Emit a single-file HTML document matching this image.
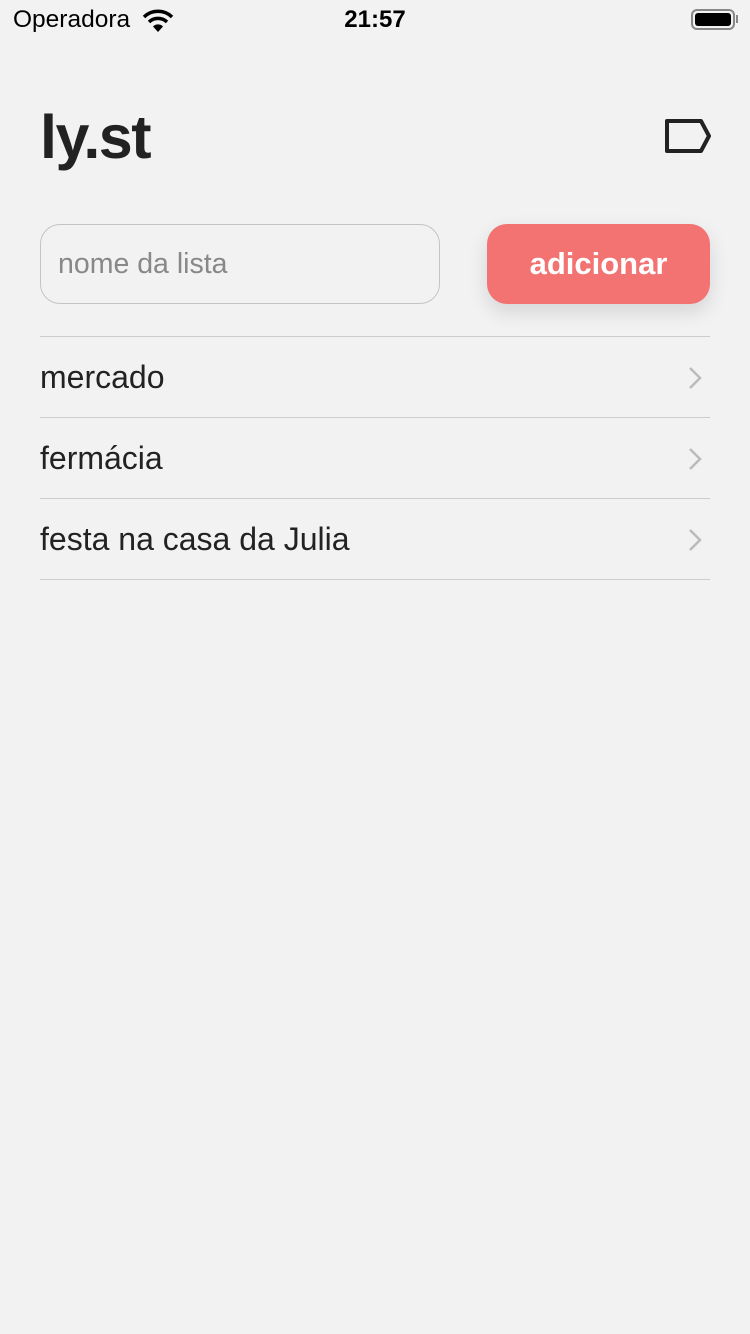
<!DOCTYPE html>
<html><head><meta charset="utf-8"><style>
*{margin:0;padding:0;box-sizing:border-box}
body{width:750px;height:1334px;background:#f2f2f2;font-family:"Liberation Sans",sans-serif;color:#222;position:relative;overflow:hidden}
.abs{position:absolute}
.row{position:absolute;left:40px;width:670px;height:81px;border-bottom:1px solid #ccc;font-size:32px;line-height:80px}
.chev{position:absolute;right:8px;top:30px}
</style></head><body>
<div class="abs" style="left:13px;top:6px;font-size:24.5px;color:#000">Operadora</div>
<svg class="abs" style="left:142px;top:9px" width="32" height="24" viewBox="0 0 32 24"><path d="M2 8 A20 20 0 0 1 30 8" stroke="#000" stroke-width="3.5" fill="none"/><path d="M7 13 A13 13 0 0 1 25 13" stroke="#000" stroke-width="3.5" fill="none"/><path d="M11 17.5 L16 23 L21 17.5 A7 7 0 0 0 11 17.5Z" fill="#000"/></svg>
<div class="abs" style="left:0;width:750px;text-align:center;top:6px;font-size:24px;font-weight:bold;color:#000">21:57</div>
<div class="abs" style="left:691px;top:9px;width:44px;height:21px;border:2px solid #888;border-radius:6px"><div style="margin:2px;height:13px;background:#000;border-radius:3px"></div></div>
<div class="abs" style="left:736px;top:15px;width:2px;height:8px;background:#888"></div>
<div class="abs" style="left:40px;top:102px;font-size:61px;font-weight:bold;letter-spacing:-1.5px;color:#222">ly.st</div>
<svg class="abs" style="left:662px;top:117px" width="50" height="40" viewBox="0 0 50 40"><path d="M5 4 H39 L47 19 L39 34 H5 Z" stroke="#222" stroke-width="4" fill="none" stroke-linejoin="round"/></svg>
<div class="abs" style="left:40px;top:224px;width:400px;height:80px;border:1px solid #c4c4c4;border-radius:20px;font-size:28.5px;color:#888;line-height:78px;padding-left:17px">nome da lista</div>
<div class="abs" style="left:487px;top:224px;width:223px;height:80px;background:#f27372;border-radius:20px;color:#fff;font-size:31px;font-weight:bold;text-align:center;line-height:80px;box-shadow:0 8px 20px rgba(0,0,0,.12)">adicionar</div>
<div class="abs" style="left:40px;top:336px;width:670px;border-top:1px solid #ccc"></div>
<div class="row" style="top:337px">mercado<svg class="chev" width="14" height="22"><path d="M2 1 L12 11 L2 21" stroke="#bbb" stroke-width="2.5" fill="none"/></svg></div>
<div class="row" style="top:418px">fermácia<svg class="chev" width="14" height="22"><path d="M2 1 L12 11 L2 21" stroke="#bbb" stroke-width="2.5" fill="none"/></svg></div>
<div class="row" style="top:499px">festa na casa da Julia<svg class="chev" width="14" height="22"><path d="M2 1 L12 11 L2 21" stroke="#bbb" stroke-width="2.5" fill="none"/></svg></div>
</body></html>
